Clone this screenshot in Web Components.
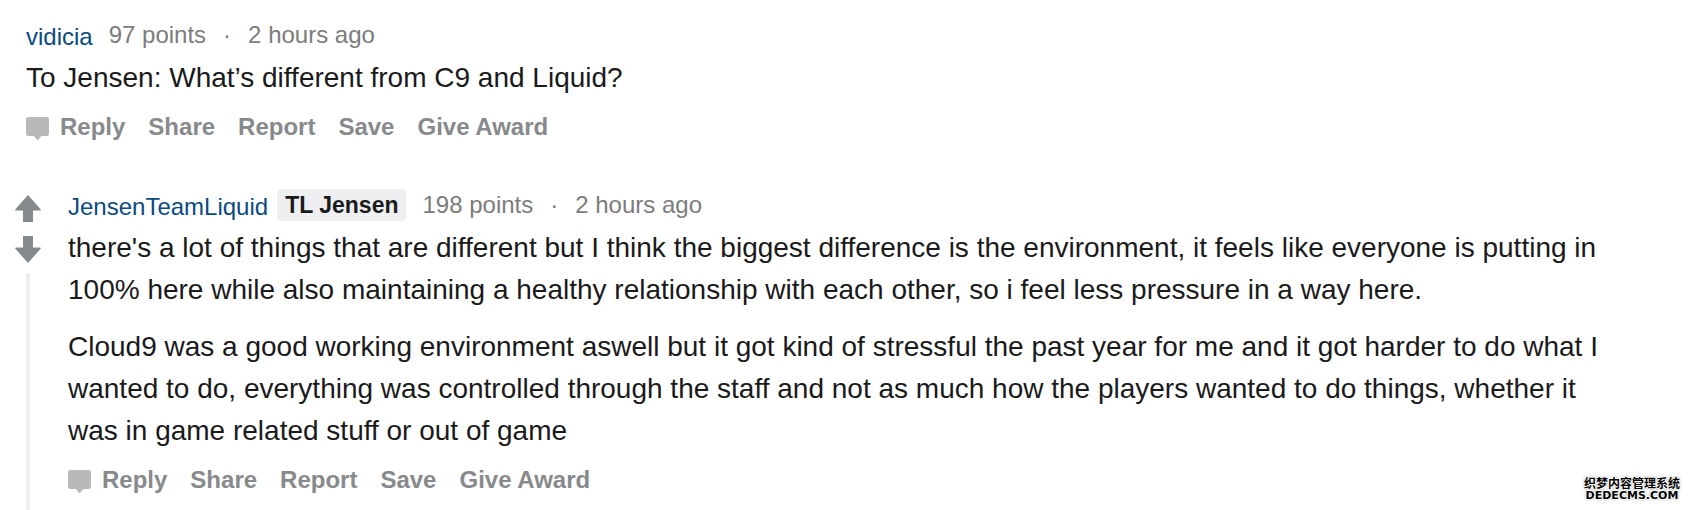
<!DOCTYPE html>
<html lang="en">
<head>
<meta charset="utf-8">
<title>Comments</title>
<style>
body { margin: 0; background: #fff; color: #1a1a1b; font-family: "Liberation Sans", Arial, sans-serif; }
</style>
</head>
<body>
<comment-thread>
  <thread-comment author="vidicia" points="97 points" age="2 hours ago">
    <p>To Jensen: What’s different from C9 and Liquid?</p>
  </thread-comment>
  <thread-comment votable author="JensenTeamLiquid" flair="TL Jensen" points="198 points" age="2 hours ago">
    <p>there's a lot of things that are different but I think the biggest difference is the environment, it feels like everyone is putting in 100% here while also maintaining a healthy relationship with each other, so i feel less pressure in a way here.</p>
    <p>Cloud9 was a good working environment aswell but it got kind of stressful the past year for me and it got harder to do what I wanted to do, everything was controlled through the staff and not as much how the players wanted to do things, whether it was in game related stuff or out of game</p>
  </thread-comment>
  <site-mark slot="mark"></site-mark>
</comment-thread>

<script>
class CommentThread extends HTMLElement {
  constructor() {
    super();
    this.attachShadow({ mode: 'open' }).innerHTML = `
      <style>
        :host { display: block; position: relative; height: 100vh; overflow: hidden; }
        main { display: flex; flex-direction: column; gap: 46px; min-height: 100%; box-sizing: border-box; padding: 19px 64px 0 15px; }
        ::slotted([votable]) { flex: 1; }
      </style>
      <main><slot></slot></main>
      <slot name="mark"></slot>`;
  }
}

class VoteRail extends HTMLElement {
  constructor() {
    super();
    this.attachShadow({ mode: 'open' }).innerHTML = `
      <style>
        :host { display: flex; flex-direction: column; align-items: center; gap: 14px; width: 26px; padding-top: 6px; }
        button { border: 0; padding: 0; background: none; display: block; }
        svg { display: block; fill: #878a8c; }
        i { width: 4px; flex: 1; background: #edeff1; margin-top: -4px; }
      </style>
      <button aria-label="Upvote"><svg width="26" height="27" viewBox="0 0 26 27"><path d="M13 0L25.6 14.2Q26.200 15.500 25 15.500H18V26.500Q18 27 17.500 27H8.500Q8 27 8 26.500V15.500H1Q-.2 15.500.4 14.200Z"/></svg></button>
      <button aria-label="Downvote"><svg width="26" height="27" viewBox="0 0 26 27"><path d="M13 27L25.6 12.800Q26.200 11.500 25 11.500H18V.5Q18 0 17.500 0H8.500Q8 0 8 .5V11.500H1Q-.2 11.500.4 12.800Z"/></svg></button>
      <i></i>`;
  }
}

class CommentActions extends HTMLElement {
  constructor() {
    super();
    this.attachShadow({ mode: 'open' }).innerHTML = `
      <style>
        :host { display: flex; gap: 23px; margin-top: 12px; }
        button { display: flex; gap: 11px; border: 0; padding: 0; background: none; color: #878a8c; font: bold 24px/32px "Liberation Sans", Arial, sans-serif; white-space: nowrap; }
        svg { display: block; margin-top: 6px; fill: #b7b9bb; }
      </style>
      <button><svg width="23" height="24" viewBox="0 0 23 24" aria-hidden="true"><path d="M2.500 0H20.500Q23 0 23 2.500V16.500Q23 19 20.500 19H15.500L11.500 23.500L8 19H2.500Q0 19 0 16.500V2.500Q0 0 2.500 0Z"/></svg>Reply</button>
      <button>Share</button><button>Report</button><button>Save</button><button>Give Award</button>`;
  }
}

class ThreadComment extends HTMLElement {
  connectedCallback() {
    if (this.shadowRoot) return;
    const at = n => this.getAttribute(n);
    this.attachShadow({ mode: 'open' }).innerHTML = `
      <style>
        :host { display: flex; gap: 27px; padding-left: 11px; }
        :host([votable]) { padding-left: 0; }
        article { flex: 1; min-width: 0; }
        header { display: flex; align-items: flex-start; height: 32px; margin-bottom: 6px; font-size: 24px; line-height: 32px; color: #7c7c7c; white-space: nowrap; }
        a { color: #0b4a80; line-height: 36px; text-decoration: none; }
        .flair { background: #edeff1; color: #1a1a1b; border-radius: 4px; padding: 0 8px; margin-left: 9px; font-size: 23px; font-weight: bold; }
        .points { margin-left: 16px; }
        .dot { margin: 0 17px; }
        ::slotted(p) { margin: 0 0 15px; font-size: 28px; line-height: 42px; }
        ::slotted(p:last-of-type) { margin-bottom: 0; }
      </style>
      ${this.hasAttribute('votable') ? '<vote-rail></vote-rail>' : ''}
      <article>
        <header>
          <a href="#">${at('author')}</a>
          ${at('flair') ? `<span class="flair">${at('flair')}</span>` : ''}
          <span class="points">${at('points')}</span><span class="dot">·</span><span>${at('age')}</span>
        </header>
        <slot></slot>
        <comment-actions></comment-actions>
      </article>`;
  }
}

class SiteMark extends HTMLElement {
  constructor() {
    super();
    this.attachShadow({ mode: 'open' }).innerHTML = `
      <style>
        :host { position: absolute; right: 10px; bottom: 8px; color: #000; text-align: center; white-space: nowrap;
          text-shadow: 1px 0 #fff, -1px 0 #fff, 0 1px #fff, 0 -1px #fff, 0 0 2px #888, 0 0 3px #888; }
        div { font: bold 12px/14px "Noto Sans CJK SC", sans-serif; }
        .latin { font: bold 11px/12px "DejaVu Sans", sans-serif; }
      </style>
      <div lang="zh">织梦内容管理系统</div>
      <div class="latin">DEDECMS.COM</div>`;
  }
}

customElements.define('comment-thread', CommentThread);
customElements.define('vote-rail', VoteRail);
customElements.define('comment-actions', CommentActions);
customElements.define('thread-comment', ThreadComment);
customElements.define('site-mark', SiteMark);
</script>
</body>
</html>
